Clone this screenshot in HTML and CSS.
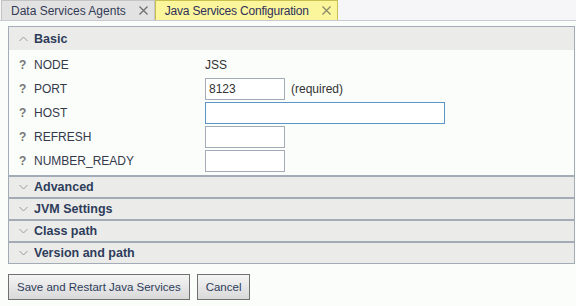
FILE: index.html
```html
<!DOCTYPE html>
<html lang="en">
<head>
    <meta charset="UTF-8">
    <title>Java Services Configuration</title>
    <link rel="stylesheet" href="styles.css">
</head>
<body>

<div class="tabs">
    <div class="tab">Data Services Agents
        <svg class="close" width="9" height="9" viewBox="0 0 9 9"><path d="M0.5 0.5L8.5 8.5M8.5 0.5L0.5 8.5" stroke="#6f6f6f" stroke-width="1.3" fill="none"/></svg>
    </div>
    <div class="tab active"><span class="narrow">Java Services Configuration</span>
        <svg class="close" width="9" height="9" viewBox="0 0 9 9"><path d="M0.5 0.5L8.5 8.5M8.5 0.5L0.5 8.5" stroke="#8a8a6a" stroke-width="1.3" fill="none"/></svg>
    </div>
</div>

<div class="panel">
    <div class="section open">
        <div class="section-head">
            <svg class="chev" width="9" height="6" viewBox="0 0 9 6"><path d="M0.5 5L4.5 1L8.5 5" stroke="#9a9a9a" fill="none"/></svg>Basic
        </div>
        <div class="section-body">
            <div class="row">
                <span class="help">?</span><span class="label">NODE</span>
                <span class="value">JSS</span>
            </div>
            <div class="row">
                <span class="help">?</span><span class="label">PORT</span>
                <input type="text" class="field" value="8123"><span class="note">(required)</span>
            </div>
            <div class="row">
                <span class="help">?</span><span class="label">HOST</span>
                <input type="text" class="field wide focus" value="">
            </div>
            <div class="row">
                <span class="help">?</span><span class="label">REFRESH</span>
                <input type="text" class="field" value="">
            </div>
            <div class="row">
                <span class="help">?</span><span class="label">NUMBER_READY</span>
                <input type="text" class="field" value="">
            </div>
        </div>
    </div>
    <div class="section"><div class="section-head"><svg class="chev" width="9" height="6" viewBox="0 0 9 6"><path d="M0.5 1L4.5 5L8.5 1" stroke="#9a9a9a" fill="none"/></svg>Advanced</div></div>
    <div class="section"><div class="section-head"><svg class="chev" width="9" height="6" viewBox="0 0 9 6"><path d="M0.5 1L4.5 5L8.5 1" stroke="#9a9a9a" fill="none"/></svg>JVM Settings</div></div>
    <div class="section"><div class="section-head"><svg class="chev" width="9" height="6" viewBox="0 0 9 6"><path d="M0.5 1L4.5 5L8.5 1" stroke="#9a9a9a" fill="none"/></svg>Class path</div></div>
    <div class="section"><div class="section-head"><svg class="chev" width="9" height="6" viewBox="0 0 9 6"><path d="M0.5 1L4.5 5L8.5 1" stroke="#9a9a9a" fill="none"/></svg>Version and path</div></div>
</div>

<div class="actions">
    <button>Save and Restart Java Services</button>
    <button>Cancel</button>
</div>

</body>
</html>
```

FILE: styles.css
```css
body {
    margin: 0;
    background: #fbfdfb;
    font-family: 'Liberation Sans', Arial, sans-serif;
    font-size: 12px;
    color: #333;
}
.tabs {
    display: flex;
    height: 20px;
    padding-left: 1px;
    border-bottom: 1px solid #c8c9d3;
    background: #f6f6f8;
}
.tab {
    display: flex;
    align-items: center;
    height: 20px;
    box-sizing: border-box;
    padding: 0 6px 0 9px;
    background: #e2e2e2;
    border: 1px solid #c4c4c4;
    border-bottom: none;
    color: #333a55;
    font-size: 12px;
}
.tab.active {
    background: #fbf59c;
    border-color: #c9c04f;
    color: #30305a;
}
.narrow {
    letter-spacing: -0.2px;
}
.close {
    margin-left: 13px;
}
.panel {
    margin: 5px 1px 0 8px;
    border: 1px solid #a3abb7;
}
.section + .section {
    border-top: 2px solid #a3abb7;
}
.section-head {
    display: flex;
    align-items: center;
    height: 20px;
    padding-left: 10px;
    background: #ebecea;
    color: #2e3c5a;
    font-weight: bold;
    font-size: 12.5px;
}
.section.open .section-head {
    height: 23px;
}
.chev {
    margin-right: 6px;
}
.section-body {
    background: #fbfdfb;
    padding: 3px 0 2px;
}
.row {
    display: flex;
    align-items: center;
    height: 24px;
}
.help {
    width: 15px;
    padding-left: 10px;
    color: #777;
    font-weight: bold;
}
.label {
    width: 171px;
    color: #333a4a;
}
.value {
    color: #333;
}
.field {
    width: 80px;
    height: 22px;
    box-sizing: border-box;
    margin: 0;
    padding: 2px 3px;
    border: 1px solid #a3abb7;
    background: #fff;
    font-family: 'Liberation Sans', Arial, sans-serif;
    font-size: 12px;
    color: #333;
}
.field.wide {
    width: 240px;
}
.field.focus {
    border-color: #5a96c8;
}
.note {
    margin-left: 6px;
    color: #333;
}
.actions {
    display: flex;
    gap: 7px;
    padding: 10px 0 0 8px;
}
button {
    height: 26px;
    padding: 0 8px;
    border: 1px solid #707070;
    background: linear-gradient(#f4f4f4, #d9d9d9);
    font-family: 'Liberation Sans', Arial, sans-serif;
    font-size: 11.5px;
    color: #2e3c5a;
}
```
